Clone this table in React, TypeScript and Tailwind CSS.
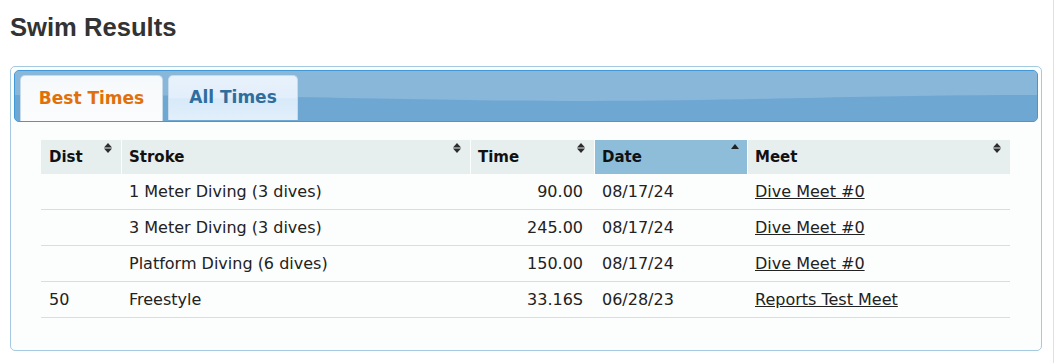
import React from "react";

const rows = [
  { dist: "", stroke: "1 Meter Diving (3 dives)", time: "90.00", date: "08/17/24", meet: "Dive Meet #0" },
  { dist: "", stroke: "3 Meter Diving (3 dives)", time: "245.00", date: "08/17/24", meet: "Dive Meet #0" },
  { dist: "", stroke: "Platform Diving (6 dives)", time: "150.00", date: "08/17/24", meet: "Dive Meet #0" },
  { dist: "50", stroke: "Freestyle", time: "33.16S", date: "06/28/23", meet: "Reports Test Meet" },
];

function SortBoth() {
  return (
    <svg className="absolute top-[3px] right-[9px]" width="8" height="10" viewBox="0 0 8 10">
      <polygon points="0,4.5 4,0 8,4.5" fill="#2b2b2b" />
      <polygon points="0,5.5 8,5.5 4,10" fill="#2b2b2b" />
    </svg>
  );
}

function SortUp() {
  return (
    <svg className="absolute top-[4px] right-[8px]" width="8" height="5" viewBox="0 0 8 5">
      <polygon points="0,5 4,0 8,5" fill="#222" />
    </svg>
  );
}

const cols = "grid grid-cols-[80px_348px_123px_152px_262px] gap-x-[1px]";

export default function App() {
  return (
    <div className="flex min-h-[363px] bg-white font-['DejaVu_Sans',sans-serif]">
      <div className="w-[1053px] pl-[10px] pt-[12px]">
        <h1 className="font-['Liberation_Sans',Arial,sans-serif] text-[25.6px] leading-[30px] font-bold text-[#333]">
          Swim Results
        </h1>
        <div className="mt-[24px] w-[1032px] h-[285px] rounded-[5px] border border-[#a6c9e2] bg-[#fcfdfd] p-[3px]">
          <div className="relative h-[52px] rounded-[5px] border border-[#4297d7] overflow-hidden bg-[#6fa7d3]">
            <svg className="absolute inset-0 w-full h-full" viewBox="0 0 1000 50" preserveAspectRatio="none">
              <rect x="0" y="0" width="1000" height="50" fill="#6fa7d3" />
              <path d="M0 0 H1000 V24 C 820 24, 720 30, 560 30 C 400 30, 300 24, 0 24 Z" fill="#89b7da" />
            </svg>
            <div className="relative flex gap-[5px] pl-[5px] pt-[4px]">
              <div className="h-[46px] w-[143px] flex items-center justify-center rounded-t-[5px] border border-b-0 border-[#c5dbec] bg-gradient-to-b from-[#f6f9fb] to-[#fbfcfd] text-[17px] font-bold text-[#e17009]">
                Best Times
              </div>
              <div className="h-[45px] w-[130px] flex items-center justify-center rounded-t-[5px] border border-b-0 border-[#c5dbec] bg-[linear-gradient(to_bottom,#e8f2fc_0%,#e2eefb_50%,#d8e9f8_52%,#e2effb_100%)] text-[17px] font-bold text-[#2e6e9e]">
                All Times
              </div>
            </div>
          </div>
          <div className="pl-[27px] mt-[18px]">
            <div className={`${cols} h-[34px] text-[15px] font-bold text-[#111]`}>
              <div className="relative bg-[#e6eeee] flex items-center pl-[8px]">Dist<SortBoth /></div>
              <div className="relative bg-[#e6eeee] flex items-center pl-[7px]">Stroke<SortBoth /></div>
              <div className="relative bg-[#e6eeee] flex items-center pl-[7px]">Time<SortBoth /></div>
              <div className="relative bg-[#8dbdd8] flex items-center pl-[7px]">Date<SortUp /></div>
              <div className="relative bg-[#e6eeee] flex items-center pl-[7px]">Meet<SortBoth /></div>
            </div>
            {rows.map((r, i) => (
              <div key={i} className={`${cols} w-[969px] h-[36px] border-b border-[#dcdcdc] text-[16px] text-[#222]`}>
                <div className="flex items-center pl-[8px]">{r.dist}</div>
                <div className="flex items-center pl-[7px]">{r.stroke}</div>
                <div className="flex items-center justify-end pr-[11px]">{r.time}</div>
                <div className="flex items-center pl-[7px]">{r.date}</div>
                <div className="flex items-center pl-[7px]">
                  <a href="#" className="underline text-[#222]">{r.meet}</a>
                </div>
              </div>
            ))}
          </div>
        </div>
      </div>
      <div className="flex-1 border-l border-[#e0e0e0] bg-white" />
    </div>
  );
}
